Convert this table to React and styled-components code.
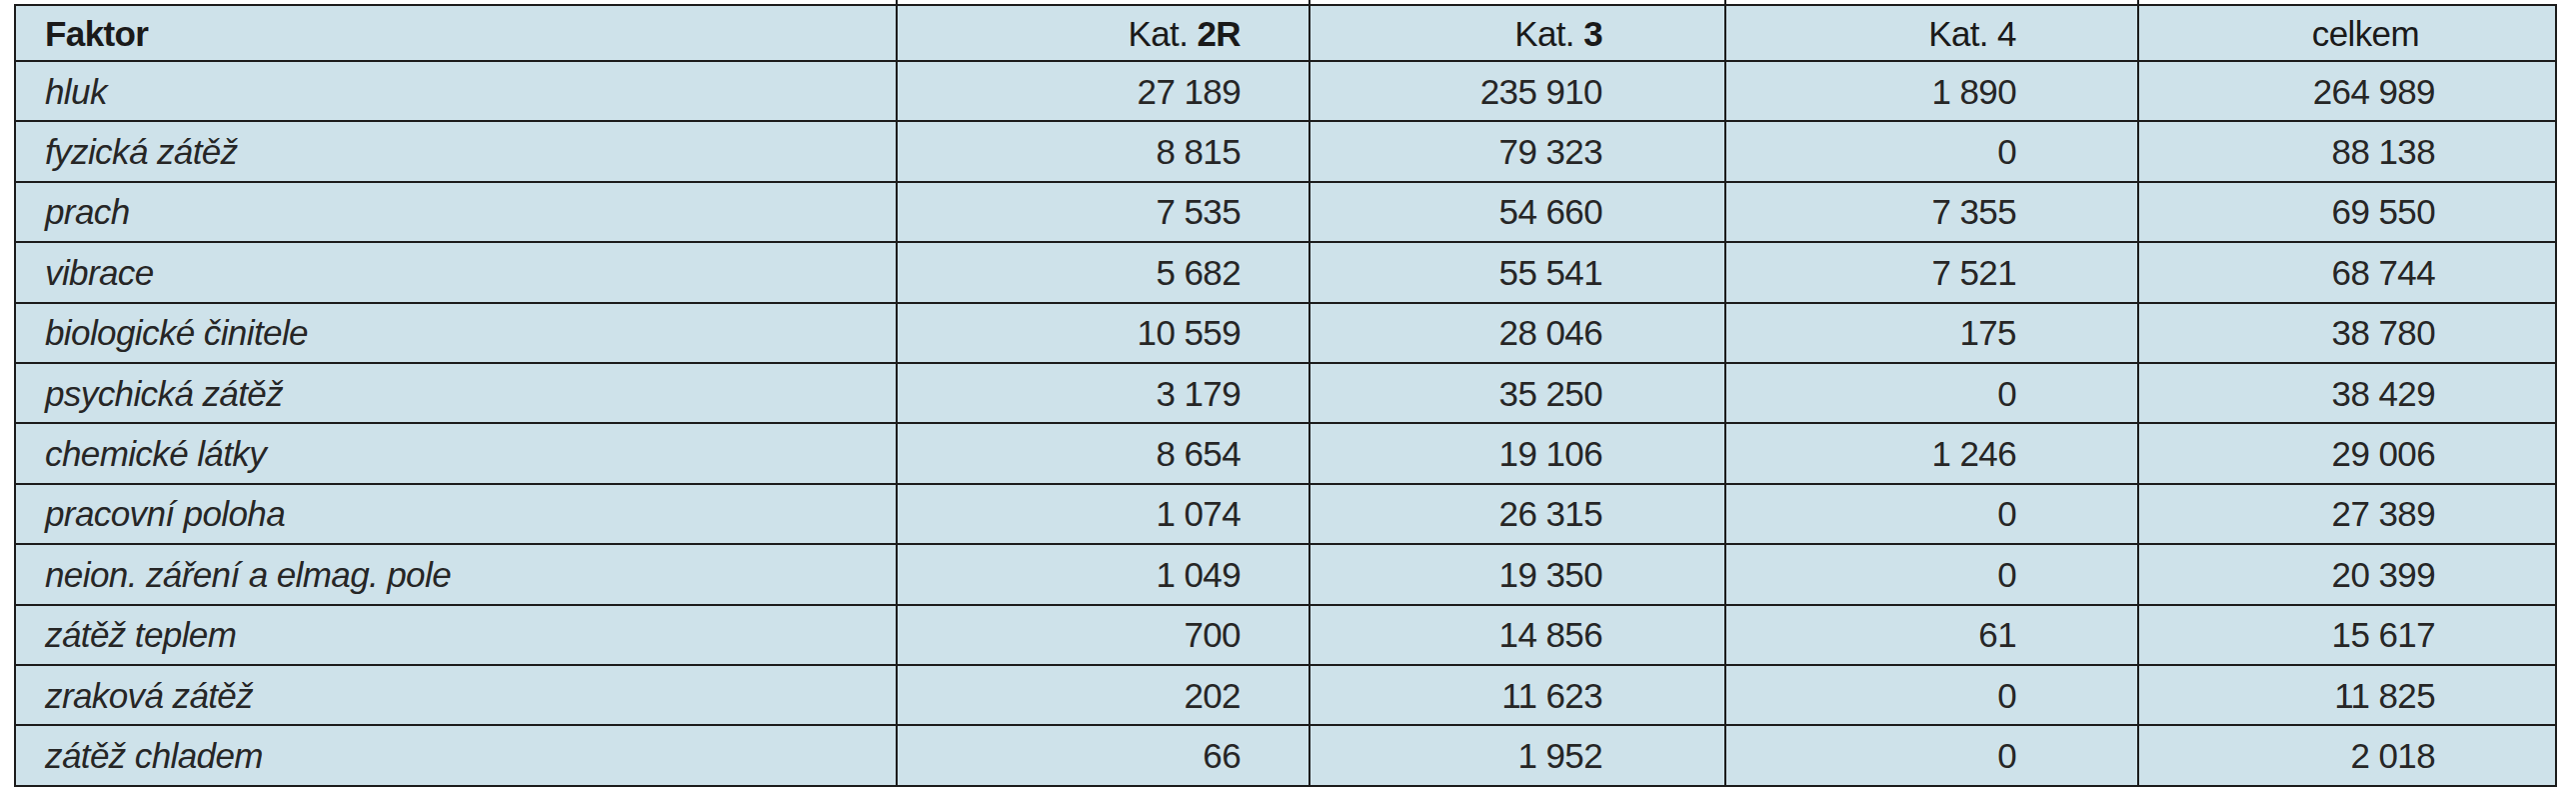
import React from "react";
import styled, { createGlobalStyle } from "styled-components";

const Global = createGlobalStyle`
  html, body { margin: 0; padding: 0; background: #ffffff; }
  body { font-family: "Liberation Sans", Arial, sans-serif; }
`;

const Page = styled.div`
  padding: 4px 0 0 14px;
`;

const Table = styled.table`
  border-collapse: collapse;
  table-layout: fixed;
  width: 2542px;
  background: #cee2ea;
  color: #262626;
  font-family: "Liberation Sans", Arial, sans-serif;
  font-size: 35px;
  letter-spacing: -0.6px;
  border: 2px solid #1c1c1c;
`;

const HeadRow = styled.tr`
  height: 56px;
`;

const BodyRow = styled.tr`
  height: 60.4px;
`;

const Th = styled.th`
  position: relative;
  border: 2px solid #1c1c1c;
  padding: 0 ${(p) => p.$pr || 0}px 0 ${(p) => p.$pl || 0}px;
  text-align: ${(p) => p.$align || "right"};
  font-weight: ${(p) => (p.$bold ? 700 : 400)};
  color: #1a1a1a;
  line-height: 1;
  vertical-align: middle;
  &:not(:first-child)::before {
    content: "";
    position: absolute;
    left: -2px;
    top: -6px;
    width: 2px;
    height: 5px;
    background: #1c1c1c;
  }
`;

const Strong = styled.span`
  font-weight: 700;
`;

const Td = styled.td`
  position: relative;
  border: 2px solid #1c1c1c;
  padding: 0 ${(p) => p.$pr || 0}px 0 ${(p) => p.$pl || 0}px;
  text-align: ${(p) => p.$align || "right"};
  font-style: ${(p) => (p.$italic ? "italic" : "normal")};
  line-height: 1;
  vertical-align: middle;
  white-space: nowrap;
  tr:last-child > &:not(:first-child)::after {
    content: "";
    position: absolute;
    left: -2px;
    bottom: -7px;
    width: 2px;
    height: 5px;
    background: #1c1c1c;
  }
`;

const cols = [
  { w: 882, align: "left", pl: 29 },
  { w: 413, align: "right", pr: 68 },
  { w: 416, align: "right", pr: 122 },
  { w: 413, align: "right", pr: 121 },
  { w: 418, align: "right", pr: 120 },
];

const rows = [
  ["hluk", "27 189", "235 910", "1 890", "264 989"],
  ["fyzická zátěž", "8 815", "79 323", "0", "88 138"],
  ["prach", "7 535", "54 660", "7 355", "69 550"],
  ["vibrace", "5 682", "55 541", "7 521", "68 744"],
  ["biologické činitele", "10 559", "28 046", "175", "38 780"],
  ["psychická zátěž", "3 179", "35 250", "0", "38 429"],
  ["chemické látky", "8 654", "19 106", "1 246", "29 006"],
  ["pracovní poloha", "1 074", "26 315", "0", "27 389"],
  ["neion. záření a elmag. pole", "1 049", "19 350", "0", "20 399"],
  ["zátěž teplem", "700", "14 856", "61", "15 617"],
  ["zraková zátěž", "202", "11 623", "0", "11 825"],
  ["zátěž chladem", "66", "1 952", "0", "2 018"],
];

export default function App() {
  return (
    <Page>
      <Global />
      <Table>
        <colgroup>
          {cols.map((c, i) => (
            <col key={i} style={{ width: c.w }} />
          ))}
        </colgroup>
        <thead>
          <HeadRow>
            <Th $align="left" $pl={29} $bold>Faktor</Th>
            <Th $pr={68}>Kat. <Strong>2R</Strong></Th>
            <Th $pr={122}>Kat. <Strong>3</Strong></Th>
            <Th $pr={121}>Kat. 4</Th>
            <Th $pr={136}>celkem</Th>
          </HeadRow>
        </thead>
        <tbody>
          {rows.map((r, i) => (
            <BodyRow key={i}>
              {r.map((v, j) => (
                <Td
                  key={j}
                  $align={cols[j].align}
                  $pl={cols[j].pl}
                  $pr={cols[j].pr}
                  $italic={j === 0}
                >
                  {v}
                </Td>
              ))}
            </BodyRow>
          ))}
        </tbody>
      </Table>
    </Page>
  );
}
